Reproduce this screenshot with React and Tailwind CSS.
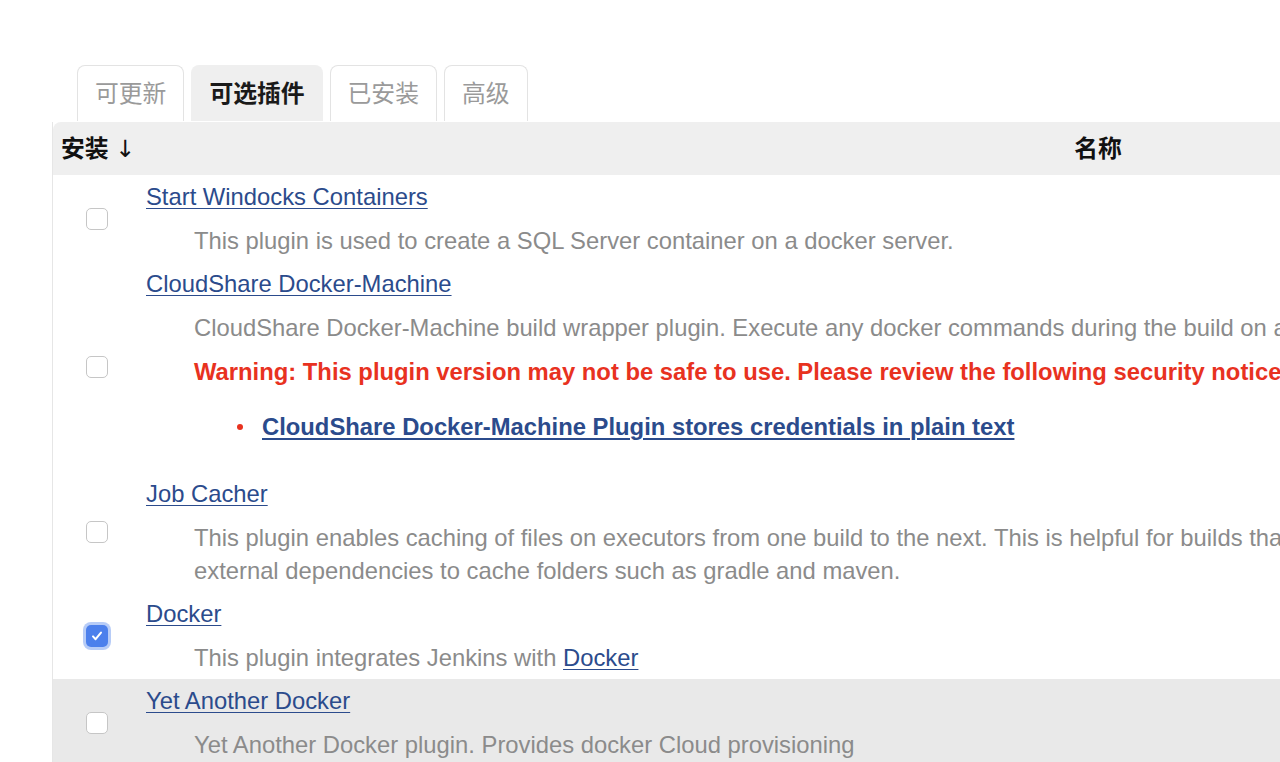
import React from "react";

const plugins = [
  {
    name: "Start Windocks Containers",
    desc: ["This plugin is used to create a SQL Server container on a docker server."],
  },
  {
    name: "CloudShare Docker-Machine",
    desc: [
      "CloudShare Docker-Machine build wrapper plugin. Execute any docker commands during the build on a CloudShare docker-machine",
    ],
    warning: "Warning: This plugin version may not be safe to use. Please review the following security notices:",
    notices: ["CloudShare Docker-Machine Plugin stores credentials in plain text"],
  },
  {
    name: "Job Cacher",
    desc: [
      "This plugin enables caching of files on executors from one build to the next. This is helpful for builds that use many",
      "external dependencies to cache folders such as gradle and maven.",
    ],
  },
  {
    name: "Docker",
    checked: true,
    desc: ["This plugin integrates Jenkins with "],
    descLink: "Docker",
  },
  {
    name: "Yet Another Docker",
    hover: true,
    desc: ["Yet Another Docker plugin. Provides docker Cloud provisioning"],
  },
];

const Checkbox = ({ checked }) =>
  checked ? (
    <span className="flex items-center justify-center w-[22px] h-[22px] rounded-[5px] bg-[#4c80ec] ring-[3px] ring-[#4c80ec]/40">
      <svg width="14" height="14" viewBox="0 0 14 14" fill="none">
        <path d="M3 7.4l2.6 2.8L11 3.6" stroke="white" strokeWidth="2" strokeLinecap="round" strokeLinejoin="round" />
      </svg>
    </span>
  ) : (
    <span className="block w-[22px] h-[22px] rounded-[5px] border-[1.5px] border-[#c6c6c6] bg-white" />
  );

const tabs = [
  { label: "可更新" },
  { label: "可选插件", active: true },
  { label: "已安装" },
  { label: "高级" },
];

export default function App() {
  return (
    <div className="w-[1280px] h-[762px] overflow-hidden bg-white font-['Liberation_Sans','Noto_Sans_CJK_SC',sans-serif] text-[23.8px] leading-[33px]">
      {/* Tabs */}
      <div className="flex gap-[7px] pl-[77px] pt-[65px]">
        {tabs.map((t) => (
          <div
            key={t.label}
            className={`h-[56px] px-[17px] flex items-center rounded-t-[8px] border border-b-0 ${
              t.active
                ? "bg-[#efefef] border-[#efefef] text-[#1a1a1a] font-bold"
                : "bg-white border-[#e3e3e3] text-[#9a9a9a]"
            }`}
          >
            {t.label}
          </div>
        ))}
      </div>

      {/* Table */}
      <div className="w-[2100px] ml-[52px] mt-[1px] border-l border-[#e6e6e6]">
        <div className="flex items-center h-[53px] bg-[#efefef] rounded-tl-[8px] font-bold text-[#111]">
          <div className="w-[88px] pl-[8px] whitespace-nowrap">
            安装 <span className="font-normal font-['DejaVu_Sans',sans-serif] text-[#111]">↓</span>
          </div>
          <div className="w-[1914px] text-center">名称</div>
        </div>

        {plugins.map((p) => (
          <div key={p.name} className={`flex items-stretch ${p.hover ? "bg-[#e9e9e9]" : "bg-white"}`}>
            <div className="w-[88px] shrink-0 flex items-center justify-center">
              <Checkbox checked={p.checked} />
            </div>
            <div className="pl-[5px] pt-[5px] pb-[5px] whitespace-nowrap">
              <a href="#" className="text-[#2b4b8c] underline underline-offset-[3px] decoration-1">
                {p.name}
              </a>
              <div className="mt-[11px] pl-[48px] text-[#8b8b8b]">
                {p.desc.map((line, i) => (
                  <div key={i}>
                    {line}
                    {p.descLink && (
                      <a href="#" className="text-[#2b4b8c] underline underline-offset-[3px] decoration-1">
                        {p.descLink}
                      </a>
                    )}
                  </div>
                ))}
              </div>
              {p.warning && (
                <div className="mt-[11px] pl-[48px] text-[#e8321f] font-bold">
                  <div>{p.warning}</div>
                  <ul className="mt-[22px] mb-[24px] pl-[43px]">
                    {p.notices.map((n) => (
                      <li key={n} className="flex items-center gap-[19px]">
                        <span className="block w-[6px] h-[6px] rounded-full bg-[#e8321f]" />
                        <a href="#" className="text-[#2b4b8c] underline underline-offset-[3px] decoration-[1.5px]">
                          {n}
                        </a>
                      </li>
                    ))}
                  </ul>
                </div>
              )}
            </div>
          </div>
        ))}
      </div>
    </div>
  );
}
